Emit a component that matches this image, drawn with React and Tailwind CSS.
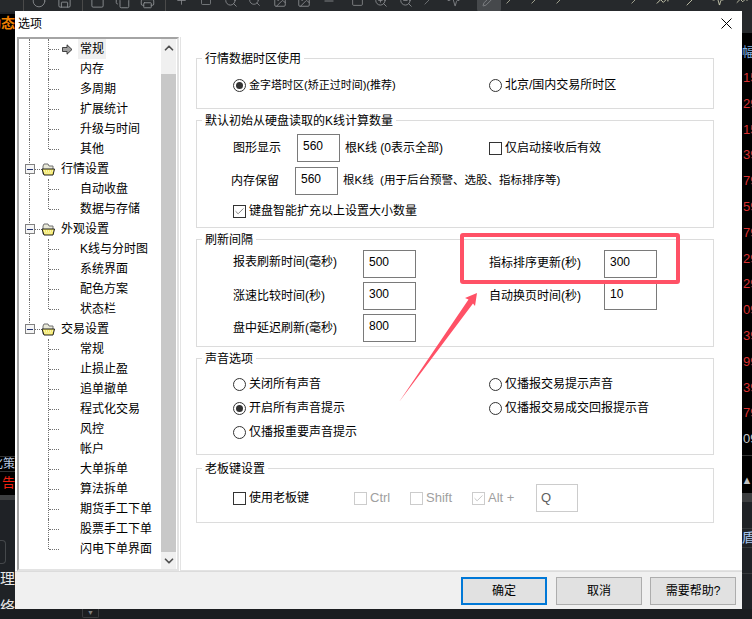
import React from "react";
import { Check, ChevronUp, ChevronDown, Circle, Square, Search, ZoomIn, ZoomOut, Slash, Pencil, Plus, Minus, Save, Image, Copy, Printer, Activity, TrendingUp } from "lucide-react";

const Cb = ({ checked, disabled }) => (
  <span className={`flex h-[13px] w-[13px] shrink-0 items-center justify-center border bg-white ${disabled ? "border-[#cccccc]" : "border-[#333333]"}`}>
    {checked && <Check size={11} strokeWidth={1.6} color={disabled ? "#b0b0b0" : "#555555"} />}
  </span>
);

const Radio = ({ checked }) => (
  <span className="flex h-[13px] w-[13px] shrink-0 items-center justify-center rounded-full border border-[#333333] bg-white">
    {checked && <span className="h-[7px] w-[7px] rounded-full bg-[#333333]" />}
  </span>
);

const Input = ({ value, className = "" }) => (
  <div className={`h-[28px] border border-[#7a7a7a] bg-white pl-[5px] pt-[3px] text-[12px] leading-[16px] ${className}`}>{value}</div>
);

const Group = ({ title, className = "", children }) => (
  <section className={`relative w-[518px] border border-[#dcdcdc] ${className}`}>
    <h3 className="absolute left-[5px] top-[-9px] bg-white px-[3px] text-[12px] font-normal leading-[18px]">{title}</h3>
    {children}
  </section>
);

const RadioRow = ({ checked, children, className = "" }) => (
  <div className={`flex h-5 items-center gap-[3px] ${className}`}>
    <Radio checked={checked} />
    <span>{children}</span>
  </div>
);

const Folder = () => (
  <svg width="15" height="13" viewBox="0 0 15 13" className="shrink-0">
    <path d="M2 3 L3 1 H7 L8 3 H12 V11 H2 Z" fill="#e8e8d8" stroke="#707070" />
    <path d="M1 6 H13.5 L12 12 H3 Z" fill="#f4e860" stroke="#202020" />
    <path d="M3 8 H12 M3.5 10 H11.5" stroke="#ffffff" strokeDasharray="1 1" />
  </svg>
);

const Arrow = () => (
  <svg width="11" height="11" viewBox="0 0 11 11" className="shrink-0">
    <path d="M0.5 3.5 H5 V0.8 L10 5.5 L5 10.2 V7.5 H0.5 Z" fill="#a0a0a0" stroke="#202020" strokeWidth="0.8" />
  </svg>
);

const tree = [
  { l: "常规", arrow: true }, { l: "内存" }, { l: "多周期" }, { l: "扩展统计" }, { l: "升级与时间" }, { l: "其他", end: true },
  { l: "行情设置", top: true }, { l: "自动收盘" }, { l: "数据与存储", end: true },
  { l: "外观设置", top: true }, { l: "K线与分时图" }, { l: "系统界面" }, { l: "配色方案" }, { l: "状态栏", end: true },
  { l: "交易设置", top: true, stop: true }, { l: "常规", after: true }, { l: "止损止盈", after: true }, { l: "追单撤单", after: true }, { l: "程式化交易", after: true }, { l: "风控", after: true }, { l: "帐户", after: true }, { l: "大单拆单", after: true }, { l: "算法拆单", after: true }, { l: "期货手工下单", after: true }, { l: "股票手工下单", after: true }, { l: "闪电下单界面", after: true, end: true },
];

const TreeRow = ({ r }) => (
  <div className="relative flex h-5 items-center">
    {!r.after && <span className={`absolute left-[10px] top-0 border-l border-dotted border-[#707070] ${r.stop ? "h-[10px]" : "h-5"}`} />}
    {r.top ? (
      <>
        <span className="absolute left-[11px] top-[10px] w-[12px] border-t border-dotted border-[#707070]" />
        <span className="relative ml-[6px] flex h-[10px] w-[10px] items-center justify-center border border-[#808080] bg-[#f4f4f4]">
          <span className="h-px w-[6px] bg-[#203070]" />
        </span>
        <span className="relative ml-[6px]"><Folder /></span>
        <span className="ml-[5px]">{r.l}</span>
      </>
    ) : (
      <>
        <span className={`absolute left-[29px] top-0 border-l border-dotted border-[#707070] ${r.end ? "h-[10px]" : "h-5"}`} />
        <span className="absolute left-[30px] top-[10px] w-[10px] border-t border-dotted border-[#707070]" />
        <span className="ml-[43px] flex w-[11px] justify-center">{r.arrow && <Arrow />}</span>
        <span className={`ml-[5px] pl-[2px] pr-[2px] leading-5 ${r.arrow ? "bg-[#f0f0f0]" : ""}`}>{r.l}</span>
      </>
    )}
  </div>
);

const tools = [
  [32, 14, Circle], [57, 15, Save], [90, 15, Square], [115, 15, Copy], [140, 15, Printer], [175, 13, Plus], [200, 12, Square],
  [224, 14, Search], [248, 13, Search], [273, 14, Image], [297, 14, Image], [322, 14, Minus], [351, 13, Square], [374, 14, ZoomIn], [399, 14, ZoomOut],
  [424, 11, Slash], [447, 13, Activity], [482, 13, Pencil], [506, 10, Slash], [531, 10, Slash], [556, 10, Slash], [610, 10, Minus], [631, 10, Slash], [656, 13, TrendingUp], [686, 12, Slash], [712, 12, Activity], [736, 12, TrendingUp],
];

const Toolbar = () => (
  <div className="relative h-[12px] shrink-0 overflow-hidden bg-[#26292c]">
    <span className="absolute left-[23px] top-0 h-3 w-px bg-[#4a4a4a]" />
    <span className="absolute left-[82px] top-0 h-3 w-px bg-[#4a4a4a]" />
    <span className="absolute left-[165px] top-0 h-3 w-px bg-[#4a4a4a]" />
    <span className="absolute left-[477px] top-[-6px] h-[18px] w-[24px] rounded-[3px] bg-[#46494c]" />
    {tools.map(([x, s, I], i) => (
      <span key={i} className="absolute top-[-6px]" style={{ left: x }}>
        <I size={s} strokeWidth={1.5} color={i > 17 ? "#e8e8c8" : "#8a8d90"} />
      </span>
    ))}
  </div>
);

const nums = ["15", "29", "15", "39", "79", "59", "79", "29", "29", "09", "39", "99", "39", "79"];

export default function App() {
  return (
    <div className="relative flex h-[619px] w-[752px] flex-col overflow-hidden bg-[#1f2226] font-['Liberation_Sans','Noto_Sans_CJK_SC',sans-serif] text-[12px] text-black">
      <Toolbar />
      <div className="flex flex-1 justify-between overflow-hidden">
        <aside className="w-[15px] overflow-hidden">
          <div className="h-[2px] bg-[#1f2226]" />
          <div className="h-[481px] bg-black">
            <div className="flex h-[18px] justify-end whitespace-nowrap text-[14px] font-bold leading-[18px] text-[#f08000]">动态</div>
            <div className="mt-[424px] flex h-[16px] justify-end whitespace-nowrap border-y border-[#333333] text-[12px] leading-[14px] text-[#b8c8e0]">化策</div>
            <div className="mt-[2px] flex h-[18px] justify-end whitespace-nowrap text-[13px] leading-[18px] text-[#f02010]">告</div>
          </div>
          <div className="h-[5px] bg-[#3c3e40]" />
          <div className="mt-[40px] h-[24px] w-[6px] rounded-r-[4px] border border-l-0 border-[#45484b]" />
          <div className="mt-[1px] flex h-[28px] justify-end whitespace-nowrap text-[15px] leading-[28px] text-[#e8e8e8]">理</div>
          <div className="flex h-[28px] justify-end whitespace-nowrap text-[15px] leading-[28px] text-[#e8e8e8]">络</div>
        </aside>
        <aside className="w-[10px] overflow-hidden">
          <div className="h-[21px] bg-[#26292c]" />
          <div className="h-[460px] bg-black">
            <div className="h-[32px] whitespace-nowrap pt-[11px] text-[13px] leading-[16px] text-[#80b0e0]">幅</div>
            {nums.map((n, i) => (
              <div key={i} className="h-[25.8px] whitespace-nowrap pl-px text-[13px] leading-[25.8px] text-[#d83030]">{n}</div>
            ))}
            <div className="h-[25.8px] whitespace-nowrap pl-px text-[13px] leading-[25.8px] text-[#c8c8c8]">09</div>
            <div className="mt-[3px] flex h-[37px] items-end justify-center border-t border-[#333333] pb-[3px] text-[11px] text-[#c0c0c0]">▲</div>
          </div>
          <div className="h-[9px] bg-[#3c3e40]" />
          <div className="mt-[26px] h-[20px] border-y border-[#35383b] text-[13px] leading-[18px] text-[#a8c8f0]">盾</div>
          <div className="mt-[25px] border-t border-[#35383b]" />
        </aside>
      </div>
      <div className="h-[10px] shrink-0 bg-[#1b1d20] pl-[82px]">
        <div className="flex h-[9px] w-[17px] items-center justify-center rounded-b-[2px] border border-t-0 border-[#3a3c3f] text-[7px] text-[#808080]">▼</div>
      </div>

      {/* dialog window */}
      <div className="absolute left-[15px] top-[11px] flex h-[598px] w-[727px] flex-col bg-white">
        <header className="flex h-[26px] shrink-0 items-center justify-between pl-[3px] pr-[10px]">
          <span className="text-[12px]">选项</span>
          <svg width="11" height="11" viewBox="0 0 11 11" className="mb-[2px]">
            <path d="M0.5 0.5 L10.5 10.5 M10.5 0.5 L0.5 10.5" stroke="#000" strokeWidth="1" fill="none" />
          </svg>
        </header>

        <div className="flex h-[534px] shrink-0">
          <nav className="ml-[2px] flex h-[534px] w-[162px] shrink-0 border-2 border-[#a4a4a4] border-r-[#e3e3e3] border-b-[#e3e3e3]">
            <div className="w-[142px] overflow-hidden">
              {tree.map((r, i) => <TreeRow key={i} r={r} />)}
            </div>
            <div className="flex w-[15px] flex-col bg-[#f0f0f0]">
              <div className="flex h-[35px] shrink-0 justify-center pt-[2px]"><ChevronUp size={14} strokeWidth={3} color="#505050" /></div>
              <div className="flex-1 bg-[#c8c8c8]" />
              <div className="flex h-[17px] shrink-0 items-center justify-center"><ChevronDown size={14} strokeWidth={3} color="#505050" /></div>
            </div>
          </nav>

          <main className="ml-px h-[534px] flex-1 border-l border-b border-[#e3e3e3] pl-[15px] pt-[21px]">
            <Group title="行情数据时区使用" className="h-[51px]">
              <div className="grid grid-cols-[256px_1fr] pl-[36px] pt-[16px]">
                <RadioRow checked><span className="text-[11px]">金字塔时区(矫正过时间)(推荐)</span></RadioRow>
                <RadioRow>北京/国内交易所时区</RadioRow>
              </div>
            </Group>

            <Group title="默认初始从硬盘读取的K线计算数量" className="mt-[11px] h-[108px]">
              <div className="pl-[36px] pt-[13px]">
                <div className="flex items-center">
                  <span className="w-[64px]">图形显示</span>
                  <Input value="560" className="w-[43px]" />
                  <span className="ml-[5px] w-[144px]">根K线 (0表示全部)</span>
                  <Cb />
                  <span className="ml-[3px]">仅启动接收后有效</span>
                </div>
                <div className="ml-[-2px] mt-[5px] flex items-center">
                  <span className="w-[64px]">内存保留</span>
                  <Input value="560" className="w-[43px]" />
                  <span className="ml-[5px] whitespace-pre text-[11.5px]">根K线  (用于后台预警、选股、指标排序等)</span>
                </div>
                <div className="mt-[6px] flex h-5 items-center gap-[3px]">
                  <Cb checked />
                  <span>键盘智能扩充以上设置大小数量</span>
                </div>
              </div>
            </Group>

            <Group title="刷新间隔" className="mt-[11px] h-[108px]">
              <div className="flex pl-[36px] pt-[10px]">
                <div className="grid w-[256px] grid-cols-[130px_53px] grid-rows-[28px_28px_28px] items-center gap-y-[4px]">
                  <span className="mb-[4px]">报表刷新时间(毫秒)</span><Input value="500" />
                  <span>涨速比较时间(秒)</span><Input value="300" />
                  <span>盘中延迟刷新(毫秒)</span><Input value="800" />
                </div>
                <div className="grid grid-cols-[115px_53px] grid-rows-[28px_28px] items-center gap-y-[4px]">
                  <span className="mb-[2px]">指标排序更新(秒)</span><Input value="300" />
                  <span>自动换页时间(秒)</span><Input value="10" />
                </div>
              </div>
            </Group>

            <Group title="声音选项" className="mt-[11px] h-[97px]">
              <div className="grid grid-cols-[256px_1fr] grid-rows-[24px_24px_24px] items-center pl-[36px] pt-[13px]">
                <RadioRow>关闭所有声音</RadioRow>
                <RadioRow>仅播报交易提示声音</RadioRow>
                <RadioRow checked>开启所有声音提示</RadioRow>
                <RadioRow>仅播报交易成交回报提示音</RadioRow>
                <RadioRow>仅播报重要声音提示</RadioRow>
              </div>
            </Group>

            <Group title="老板键设置" className="mt-[13px] h-[55px]">
              <div className="flex items-center pl-[36px] pt-[15px]">
                <Cb />
                <span className="ml-[3px] w-[105px]">使用老板键</span>
                <Cb disabled />
                <span className="ml-[3px] w-[40px] text-[13px] text-[#a0a0a0]">Ctrl</span>
                <Cb disabled />
                <span className="ml-[3px] w-[46px] text-[13px] text-[#a0a0a0]">Shift</span>
                <Cb checked disabled />
                <span className="ml-[3px] w-[48px] text-[13px] text-[#a0a0a0]">Alt +</span>
                <div className="h-[28px] w-[42px] border border-[#cccccc] pl-[4px] text-[13px] leading-[26px] text-[#606060]">Q</div>
              </div>
            </Group>
          </main>
        </div>

        <footer className="flex flex-1 items-center justify-end border-t border-[#dcdcdc] bg-[#f0f0f0] pr-[6px]">
          <button className="h-[28px] w-[86px] border-2 border-[#0078d7] bg-[#e1e1e1] text-[12px]">确定</button>
          <button className="ml-[9px] h-[28px] w-[86px] border border-[#adadad] bg-[#e1e1e1] text-[12px]">取消</button>
          <button className="ml-[8px] h-[28px] w-[86px] border border-[#adadad] bg-[#e1e1e1] text-[12px]">需要帮助?</button>
        </footer>
      </div>

      {/* screenshot annotation */}
      <div className="absolute left-[460px] top-[233px] h-[51px] w-[220px] rounded-[3px] border-[4px] border-[#ff5166]" />
      <svg className="absolute left-[395px] top-[288px]" width="90" height="120" viewBox="395 288 90 120">
        <path d="M399 402 L468.5 299.5 L465 298 L477 293 L475 306 L473 303.5 Z" fill="#ff5166" />
      </svg>
    </div>
  );
}
